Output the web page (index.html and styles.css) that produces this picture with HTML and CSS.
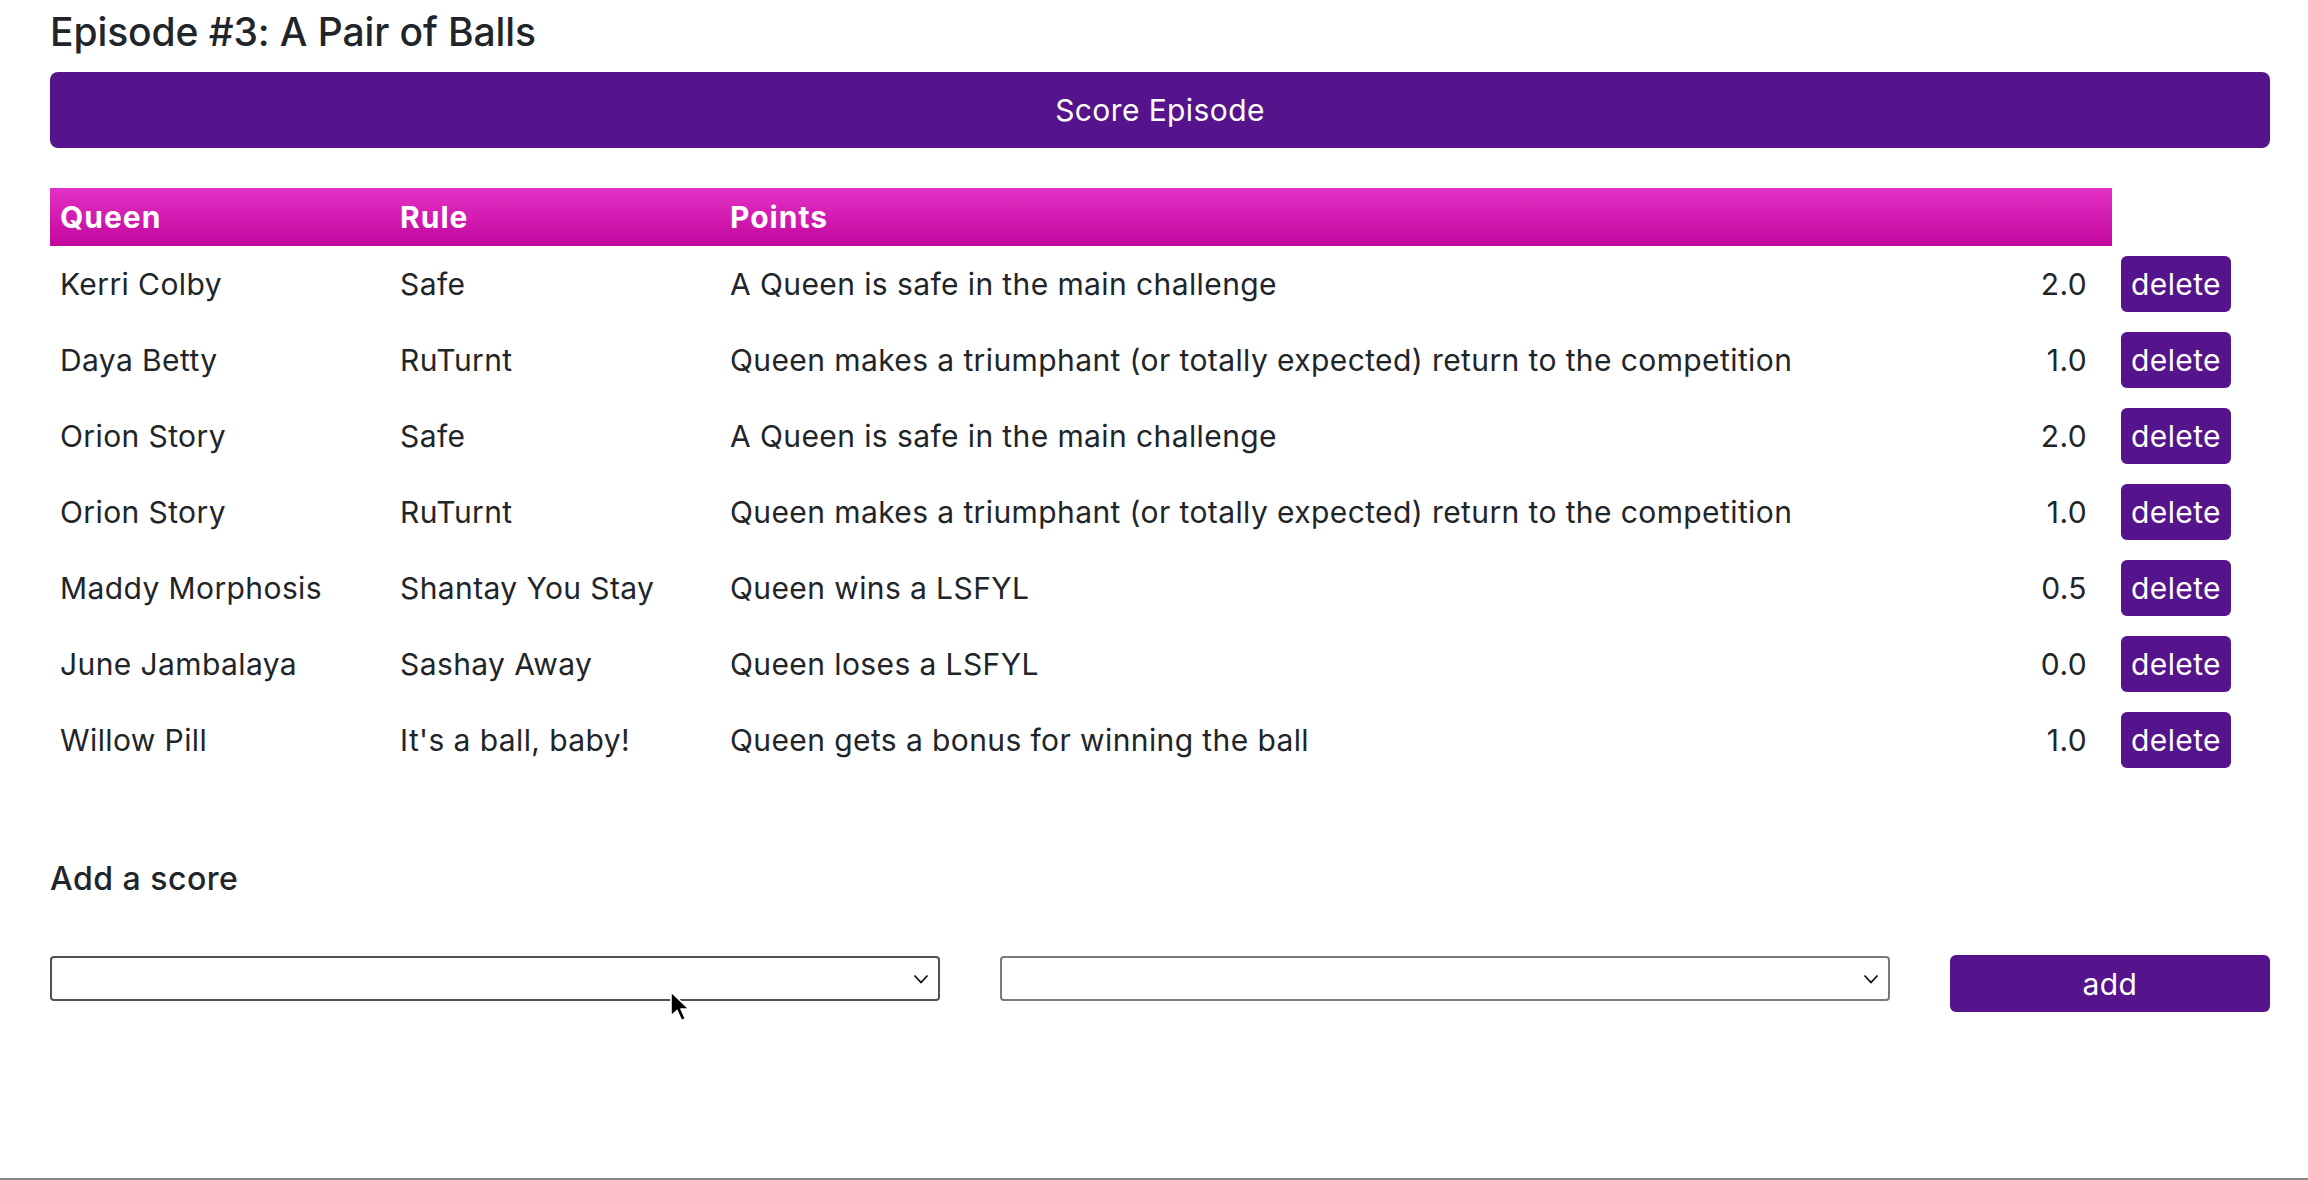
FILE: index.html
```html
<!DOCTYPE html>
<html lang="en">
<head>
<meta charset="utf-8">
<title>Episode #3: A Pair of Balls</title>
<link rel="stylesheet" href="styles.css">
</head>
<body>
<div class="page">
  <div class="container">
    <h3 class="title">Episode #3: A Pair of Balls</h3>
    <button class="btn btn-block">Score Episode</button>

    <table class="scores">
      <colgroup>
        <col class="c-queen"><col class="c-rule"><col class="c-desc"><col class="c-num"><col class="c-act">
      </colgroup>
      <thead>
        <tr><th>Queen</th><th>Rule</th><th colspan="2">Points</th><td class="blank"></td></tr>
      </thead>
      <tbody>
        <tr><td>Kerri Colby</td><td>Safe</td><td>A Queen is safe in the main challenge</td><td class="num">2.0</td><td class="act"><button class="btn btn-sm">delete</button></td></tr>
        <tr><td>Daya Betty</td><td>RuTurnt</td><td>Queen makes a triumphant (or totally expected) return to the competition</td><td class="num">1.0</td><td class="act"><button class="btn btn-sm">delete</button></td></tr>
        <tr><td>Orion Story</td><td>Safe</td><td>A Queen is safe in the main challenge</td><td class="num">2.0</td><td class="act"><button class="btn btn-sm">delete</button></td></tr>
        <tr><td>Orion Story</td><td>RuTurnt</td><td>Queen makes a triumphant (or totally expected) return to the competition</td><td class="num">1.0</td><td class="act"><button class="btn btn-sm">delete</button></td></tr>
        <tr><td>Maddy Morphosis</td><td>Shantay You Stay</td><td>Queen wins a LSFYL</td><td class="num">0.5</td><td class="act"><button class="btn btn-sm">delete</button></td></tr>
        <tr><td>June Jambalaya</td><td>Sashay Away</td><td>Queen loses a LSFYL</td><td class="num">0.0</td><td class="act"><button class="btn btn-sm">delete</button></td></tr>
        <tr><td>Willow Pill</td><td>It's a ball, baby!</td><td>Queen gets a bonus for winning the ball</td><td class="num">1.0</td><td class="act"><button class="btn btn-sm">delete</button></td></tr>
      </tbody>
    </table>

    <h5 class="subtitle">Add a score</h5>
    <div class="form-row">
      <div class="col-5"><select class="select select-hover"><option></option></select>
        <svg class="cursor" width="22" height="32" viewBox="0 0 22 32"><path d="M2 1 L2 25 L8 19.5 L12.5 29.5 L16.5 27.8 L12 18 L20 18 Z" fill="#000" stroke="#fff" stroke-width="1.6" stroke-linejoin="round"/></svg>
      </div>
      <div class="col-5"><select class="select"><option></option></select></div>
      <div class="col-2"><button class="btn btn-add">add</button></div>
    </div>
  </div>
</div>
</body>
</html>
```
FILE: styles.css
```css
* { box-sizing: border-box; }
html, body { margin: 0; padding: 0; background: #fff; }
body {
  font-family: Inter, "Noto Sans", "Liberation Sans", sans-serif;
  color: #212529;
  font-size: 30px;
  letter-spacing: 0.4px;
}
.page {
  min-height: 100vh;
  border-bottom: 2px solid #8a8a8a;
}
.container {
  width: 2220px;
  margin-left: 50px;
  padding-top: 8px;
}
.title {
  margin: 0;
  font-size: 39px;
  line-height: 47px;
  font-weight: 500;
  letter-spacing: -0.1px;
}
.btn {
  font-family: inherit;
  letter-spacing: 0.4px;
  border: 0;
  background: #55148b;
  color: #fff;
  cursor: pointer;
}
.btn-block {
  display: block;
  width: 100%;
  height: 76px;
  margin-top: 17px;
  border-radius: 8px;
  font-size: 30px;
}
.scores {
  width: 100%;
  margin-top: 40px;
  border-collapse: collapse;
  table-layout: fixed;
}
.c-queen { width: 340px; }
.c-rule { width: 330px; }
.c-desc { width: 1247px; }
.c-num { width: 145px; }
.c-act { width: 158px; }
.scores th {
  text-align: left;
  color: #fff;
  font-weight: 700;
  height: 58px;
  padding: 0 10px;
  background: linear-gradient(to bottom, #e431c5, #c2079d);
  font-size: 30px;
  letter-spacing: 1px;
}
.scores td.blank { background: #fff; }
.scores tbody td {
  height: 76px;
  padding: 0 10px;
  vertical-align: middle;
  white-space: nowrap;
}
.scores td.num {
  text-align: right;
  padding-right: 25px;
}
.scores td.act { padding-left: 9px; }
.btn-sm {
  width: 110px;
  height: 56px;
  border-radius: 6px;
  font-size: 30px;
  padding: 0;
  display: block;
}
.subtitle {
  margin: 82px 0 0;
  font-size: 32px;
  line-height: 38px;
  font-weight: 500;
  letter-spacing: 0.5px;
}
.form-row {
  display: flex;
  gap: 60px;
  margin-top: 57px;
  align-items: flex-start;
}
.col-5 { width: 890px; position: relative; }
.col-2 { width: 320px; }
.select {
  appearance: none;
  -webkit-appearance: none;
  display: block;
  width: 100%;
  height: 45px;
  margin-top: 1px;
  border: 2px solid #7a7a7a;
  border-radius: 4px;
  background: #fff url("data:image/svg+xml;utf8,<svg xmlns='http://www.w3.org/2000/svg' width='16' height='12' viewBox='0 0 16 12'><path d='M1.5 2.5 L8 9.5 L14.5 2.5' fill='none' stroke='%23111' stroke-width='1.8'/></svg>") no-repeat right 9px center;
  font-family: inherit;
  font-size: 24px;
}
.select-hover { border-color: #505050; }
.cursor {
  position: absolute;
  left: 619px;
  top: 36px;
}
.btn-add {
  width: 100%;
  height: 57px;
  border-radius: 6px;
  font-size: 30px;
  padding: 0;
}
```
